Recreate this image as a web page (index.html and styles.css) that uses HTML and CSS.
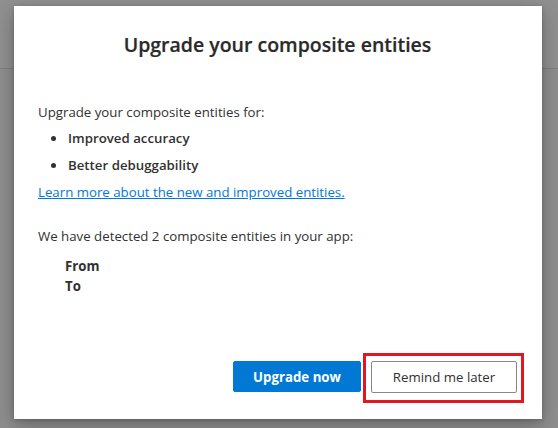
FILE: index.html
```html
<!DOCTYPE html>
<html lang="en">
<head>
<meta charset="utf-8">
<title>Upgrade your composite entities</title>
<link rel="stylesheet" href="styles.css">
</head>
<body>
<div class="backdrop">
  <div class="page-header"></div>
</div>
<div class="dialog" role="dialog">
  <h1 class="title">Upgrade your composite entities</h1>
  <div class="content">
    <p class="intro">Upgrade your composite entities for:</p>
    <ul class="bullets">
      <li><span class="dot"></span>Improved accuracy</li>
      <li><span class="dot"></span>Better debuggability</li>
    </ul>
    <a class="link" href="#">Learn more about the new and improved entities.</a>
    <p class="detected">We have detected 2 composite entities in your app:</p>
    <div class="entities">
      <div class="entity">From</div>
      <div class="entity">To</div>
    </div>
  </div>
  <div class="footer">
    <button class="btn btn-primary">Upgrade now</button>
    <div class="highlight-wrap">
      <button class="btn btn-default">Remind me later</button>
      <span class="highlight"></span>
    </div>
  </div>
</div>
</body>
</html>
```
FILE: styles.css
```css
html, body {
  margin: 0;
  padding: 0;
  width: 558px;
  height: 428px;
  overflow: hidden;
}
body {
  background: #8e8e8e;
  font-family: "Open Sans", "Noto Sans", sans-serif;
  color: #323130;
  position: relative;
}
.backdrop {
  position: absolute;
  inset: 0;
  background: #8e8e8e;
}
.page-header {
  height: 68px;
  border-bottom: 1px solid #7f7f7f;
  background: #909090;
}
.dialog {
  position: absolute;
  left: 14px;
  top: 6px;
  width: 528px;
  height: 413px;
  background: #ffffff;
  box-shadow: 0 6px 18px rgba(0, 0, 0, 0.28), 0 1px 4px rgba(0, 0, 0, 0.18);
  box-sizing: border-box;
  padding: 26px 25px 26px 24px;
  display: flex;
  flex-direction: column;
}
.title {
  margin: 0;
  font-size: 19.5px;
  line-height: 26px;
  font-weight: 600;
  text-align: center;
  color: #2b2a29;
  -webkit-text-stroke: 0.2px #2b2a29;
}
.content {
  margin-top: 44px;
  font-size: 13.25px;
  line-height: 20px;
}
.intro, .detected {
  margin: 0;
}
.bullets {
  list-style: none;
  margin: 6px 0 0 0;
  padding: 0 0 0 13px;
  font-weight: 600;
}
.bullets li {
  display: flex;
  align-items: center;
  margin-bottom: 7px;
}
.bullets li:last-child {
  margin-bottom: 0;
}
.dot {
  width: 5px;
  height: 5px;
  border-radius: 50%;
  background: #323130;
  margin-right: 12px;
  margin-top: 1px;
}
.link {
  display: inline-block;
  margin-top: 7px;
  color: #0078d4;
  text-decoration: underline;
}
.detected {
  margin-top: 24px;
}
.entities {
  margin-top: 10px;
  padding-left: 27px;
  font-weight: 700;
}
.footer {
  margin-top: auto;
  display: flex;
  justify-content: flex-end;
  gap: 10px;
}
.btn {
  height: 31px;
  box-sizing: border-box;
  font-family: "Open Sans", "Noto Sans", sans-serif;
  font-size: 13.25px;
  border-radius: 2px;
  padding: 0;
  cursor: pointer;
}
.btn-primary {
  width: 128px;
  background: #0078d4;
  border: 1px solid #0078d4;
  color: #ffffff;
  font-weight: 700;
}
.btn-default {
  width: 146px;
  height: 32px;
  background: #ffffff;
  border: 1px solid #8a8886;
  color: #323130;
  font-weight: 400;
}
.highlight-wrap {
  position: relative;
  display: flex;
}
.highlight {
  position: absolute;
  left: -8px;
  top: -8px;
  right: -7px;
  bottom: -10px;
  border: 3px solid #e3151f;
  pointer-events: none;
}
```
